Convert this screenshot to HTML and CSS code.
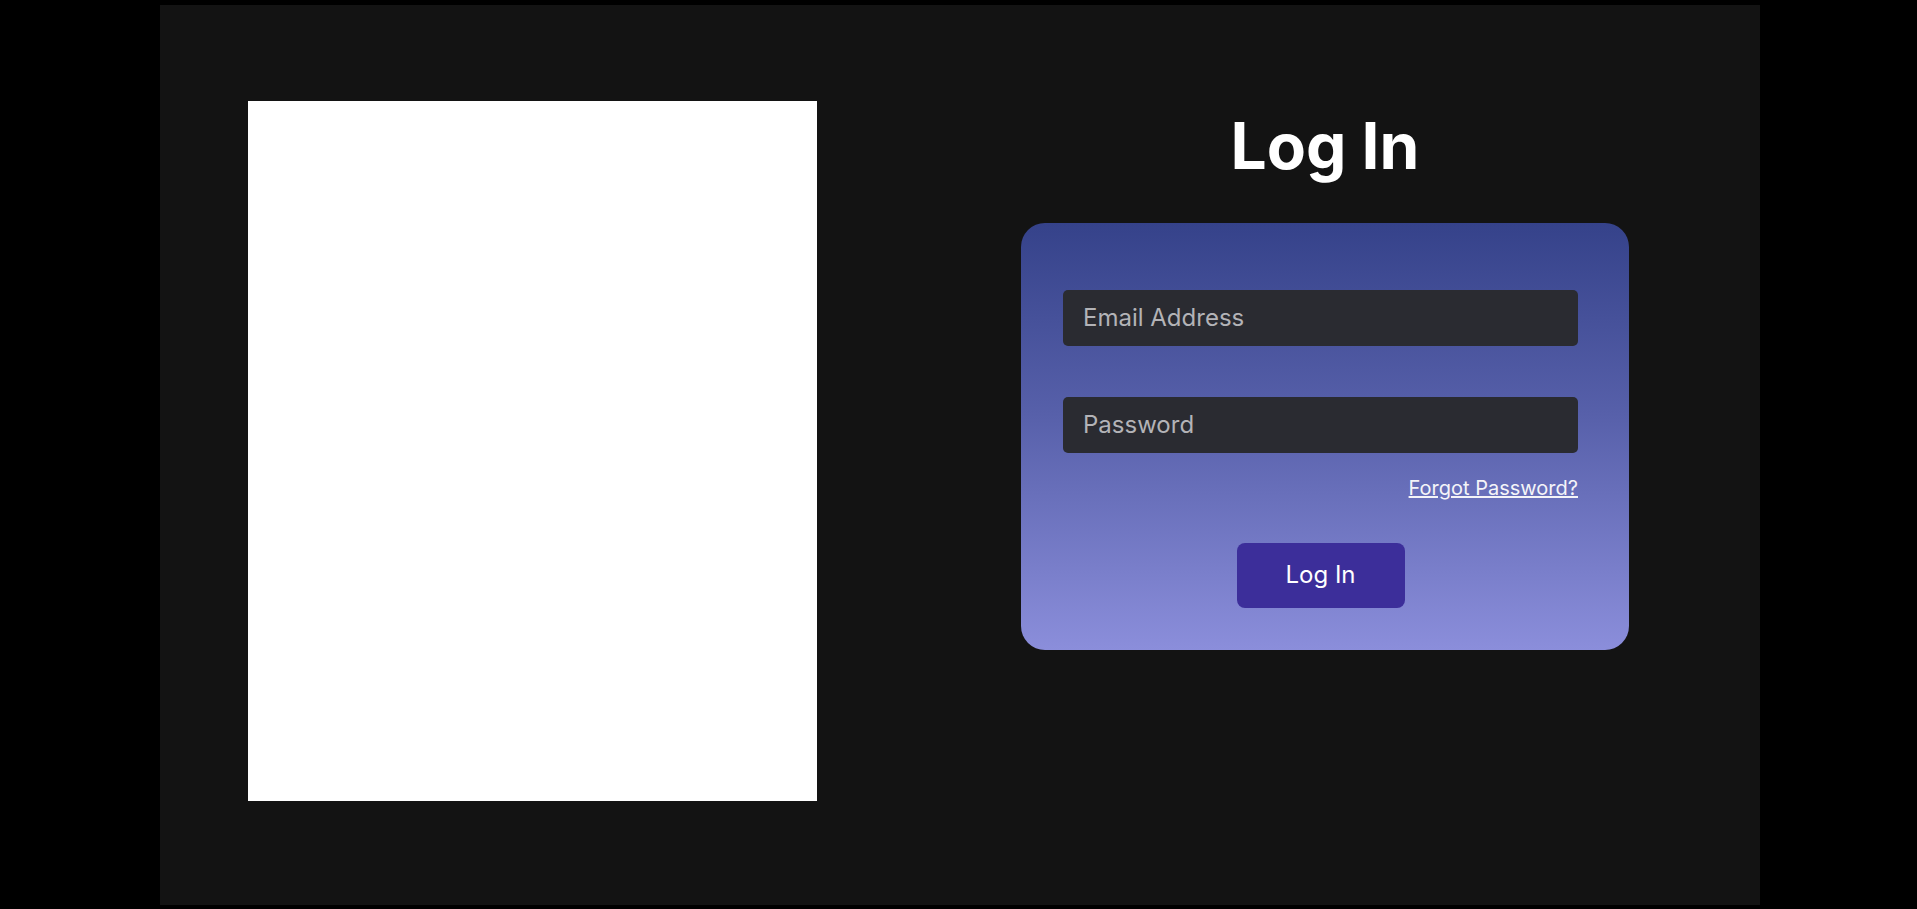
FILE: index.html
```html
<!DOCTYPE html>
<html lang="en">
<head>
<meta charset="utf-8">
<title>Log In</title>
<link rel="stylesheet" href="styles.css">
</head>
<body>
  <main class="panel">
    <div class="picture"></div>
    <section class="login">
      <h1 class="title">Log In</h1>
      <form class="card">
        <input class="field" type="email" placeholder="Email Address">
        <input class="field field-password" type="password" placeholder="Password">
        <div class="forgot-row"><a class="forgot" href="#">Forgot Password?</a></div>
        <div class="actions"><button class="submit" type="button">Log In</button></div>
      </form>
    </section>
  </main>
</body>
</html>
```

FILE: styles.css
```css
* { box-sizing: border-box; }

html, body {
  margin: 0;
  padding: 0;
  background: #000000;
  font-family: Inter, "Noto Sans", "Liberation Sans", sans-serif;
}

body {
  height: 909px;
  overflow: hidden;
}

.panel {
  margin: 5px 0 0 160px;
  width: 1600px;
  height: 900px;
  background: #131313;
  display: flex;
  align-items: flex-start;
  padding: 96px 88px 0 88px;
}

.picture {
  flex: none;
  width: 569px;
  height: 700px;
  background: #ffffff;
}

.login {
  flex: none;
  width: 608px;
  margin-left: 204px;
  display: flex;
  flex-direction: column;
  align-items: center;
}

.title {
  margin: 7px 0 38px 0;
  font-size: 64px;
  line-height: 1.2;
  font-weight: 700;
  color: #ffffff;
}

.card {
  width: 608px;
  height: 427px;
  border-radius: 24px;
  background: linear-gradient(to bottom, #35428a 0%, #5760aa 45%, #8b8edb 100%);
  padding: 67px 51px 42px 42px;
  display: flex;
  flex-direction: column;
}

.field {
  display: block;
  width: 100%;
  height: 56px;
  border: none;
  border-radius: 5px;
  background: #2a2b31;
  color: #e0e0e0;
  padding: 0 20px;
  font-family: inherit;
  font-size: 24px;
  outline: none;
}

.field::placeholder {
  color: #b3b3b7;
  opacity: 1;
}

.field-password {
  margin-top: 51px;
}

.forgot-row {
  display: flex;
  justify-content: flex-end;
  margin-top: 23px;
}

.forgot {
  font-size: 20px;
  line-height: 1.2;
  color: #f4f4f8;
  text-decoration: underline;
}

.actions {
  display: flex;
  justify-content: center;
  margin-top: 43px;
}

.submit {
  width: 168px;
  height: 65px;
  border: none;
  border-radius: 8px;
  background: #3c2e9a;
  color: #ffffff;
  font-family: inherit;
  font-size: 24px;
  line-height: 1.2;
  padding: 0;
  cursor: pointer;
}
```
